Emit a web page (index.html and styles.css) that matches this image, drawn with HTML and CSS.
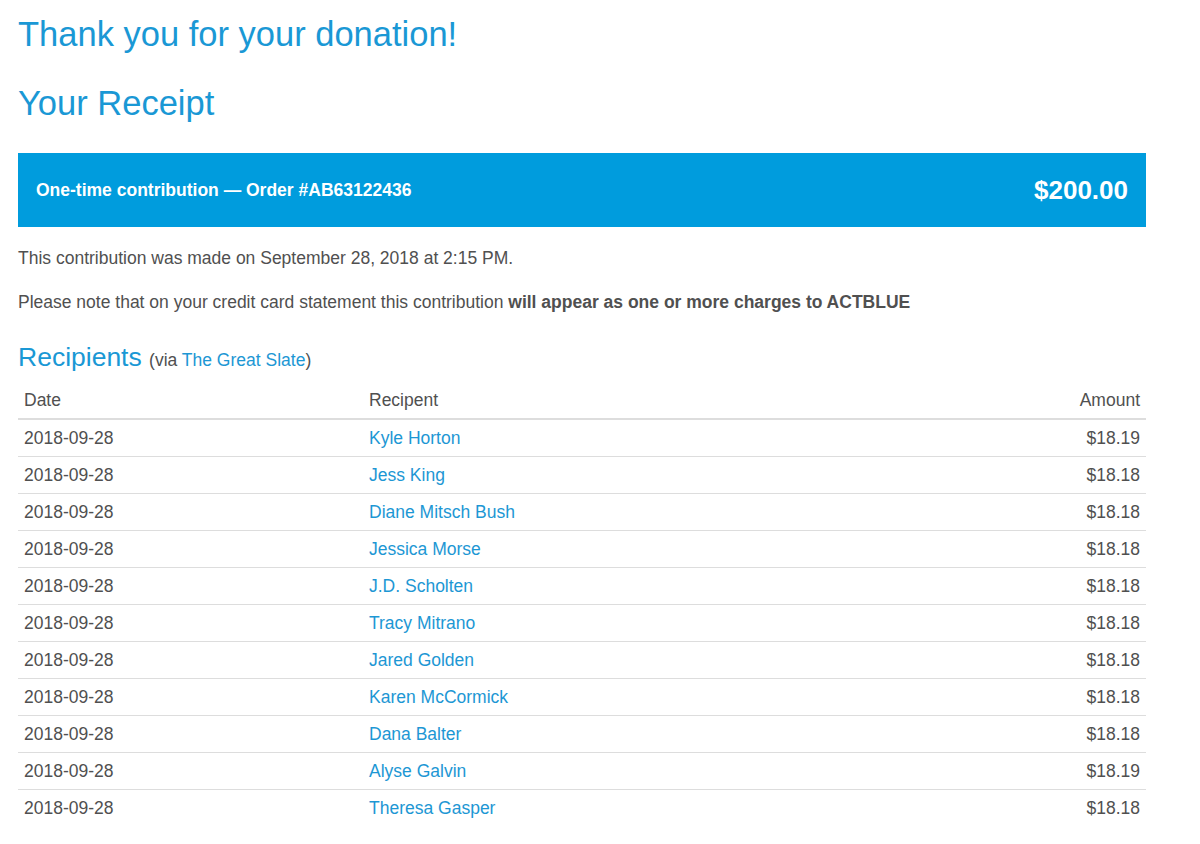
FILE: index.html
```html
<!DOCTYPE html>
<html lang="en">
<head>
    <meta charset="UTF-8">
    <title>Your Receipt</title>
    <link rel="stylesheet" href="styles.css">
</head>
<body>
    <div class="receipt">
        <h1>Thank you for your donation!</h1>
        <h2>Your Receipt</h2>

        <div class="order-bar">
            <span class="order-title">One-time contribution &mdash; Order #AB63122436</span>
            <span class="order-total">$200.00</span>
        </div>

        <p>This contribution was made on September 28, 2018 at 2:15 PM.</p>
        <p>Please note that on your credit card statement this contribution <strong>will appear as one or more charges to ACTBLUE</strong></p>

        <h3>Recipients <small>(via <a href="#">The Great Slate</a>)</small></h3>

        <table class="recipients">
            <thead>
                <tr>
                    <th>Date</th>
                    <th>Recipent</th>
                    <th class="amount">Amount</th>
                </tr>
            </thead>
            <tbody>
                <tr><td>2018-09-28</td><td><a href="#">Kyle Horton</a></td><td class="amount">$18.19</td></tr>
                <tr><td>2018-09-28</td><td><a href="#">Jess King</a></td><td class="amount">$18.18</td></tr>
                <tr><td>2018-09-28</td><td><a href="#">Diane Mitsch Bush</a></td><td class="amount">$18.18</td></tr>
                <tr><td>2018-09-28</td><td><a href="#">Jessica Morse</a></td><td class="amount">$18.18</td></tr>
                <tr><td>2018-09-28</td><td><a href="#">J.D. Scholten</a></td><td class="amount">$18.18</td></tr>
                <tr><td>2018-09-28</td><td><a href="#">Tracy Mitrano</a></td><td class="amount">$18.18</td></tr>
                <tr><td>2018-09-28</td><td><a href="#">Jared Golden</a></td><td class="amount">$18.18</td></tr>
                <tr><td>2018-09-28</td><td><a href="#">Karen McCormick</a></td><td class="amount">$18.18</td></tr>
                <tr><td>2018-09-28</td><td><a href="#">Dana Balter</a></td><td class="amount">$18.18</td></tr>
                <tr><td>2018-09-28</td><td><a href="#">Alyse Galvin</a></td><td class="amount">$18.19</td></tr>
                <tr><td>2018-09-28</td><td><a href="#">Theresa Gasper</a></td><td class="amount">$18.18</td></tr>
            </tbody>
        </table>
    </div>
</body>
</html>
```

FILE: styles.css
```css
body {
    margin: 0;
    padding: 0;
    background-color: #fff;
    font-family: 'Liberation Sans', Arial, sans-serif;
    font-size: 17.5px;
    color: #505050;
}

.receipt {
    width: 1128px;
    padding: 14px 18px;
}

a {
    color: #1d97d4;
    text-decoration: none;
}

h1, h2 {
    font-weight: normal;
    font-size: 34.5px;
    line-height: 40px;
    color: #1a98d5;
    margin: 0;
}

h2 {
    margin-top: 29px;
}

.order-bar {
    display: flex;
    justify-content: space-between;
    align-items: center;
    height: 74px;
    padding: 0 18px;
    margin-top: 30px;
    background-color: #009cdd;
    color: #fff;
    font-weight: bold;
}

.order-title {
    font-size: 17.5px;
}

.order-total {
    font-size: 26px;
}

p {
    margin: 21px 0 0;
    line-height: 20px;
}

p + p {
    margin-top: 24px;
}

h3 {
    font-weight: normal;
    font-size: 26.5px;
    line-height: 30px;
    color: #1a98d5;
    margin: 30px 0 0;
}

h3 small {
    font-size: 17.5px;
    color: #505050;
}

.recipients {
    width: 100%;
    border-collapse: collapse;
    margin-top: 6px;
}

.recipients th,
.recipients td {
    padding: 8px 6px;
    line-height: 20px;
    text-align: left;
    font-weight: normal;
}

.recipients th {
    padding-top: 9px;
    border-bottom: 2px solid #ddd;
}

.recipients td {
    border-bottom: 1px solid #ddd;
}

.recipients tbody tr:last-child td {
    border-bottom: none;
}

.recipients td:first-child,
.recipients th:first-child {
    width: 333px;
}

.recipients .amount {
    text-align: right;
}
```
